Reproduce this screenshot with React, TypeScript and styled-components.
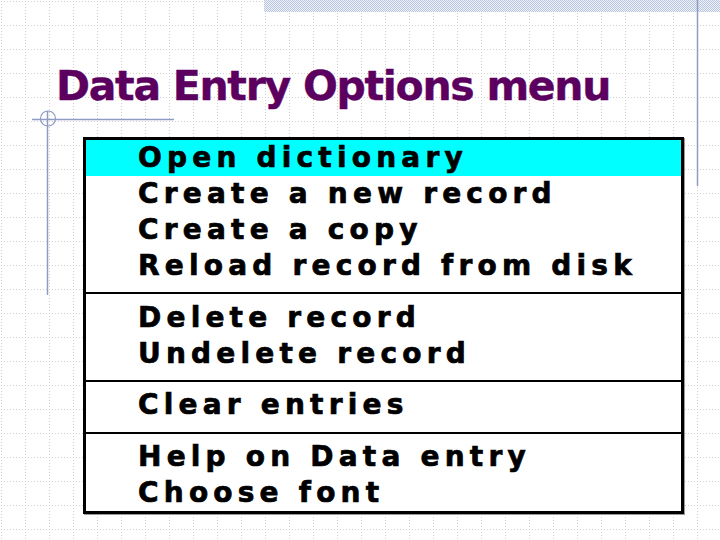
import React from 'react';
import styled, { createGlobalStyle } from 'styled-components';

const GlobalStyle = createGlobalStyle`
  html, body {
    margin: 0;
    padding: 0;
    background: #ffffff;
  }
`;

const Slide = styled.div`
  position: relative;
  width: 720px;
  height: 540px;
  overflow: hidden;
  background: #ffffff;
  padding: 62px 0 0 0;
  box-sizing: border-box;
  display: flex;
  flex-direction: column;
`;

const Backdrop = styled.svg`
  position: absolute;
  inset: 0;
  z-index: 0;
`;

const Title = styled.h1`
  position: relative;
  z-index: 1;
  margin: 0 0 0 56px;
  font-family: 'DejaVu Sans', 'Liberation Sans', sans-serif;
  font-weight: bold;
  font-size: 41px;
  letter-spacing: -1.3px;
  line-height: 48px;
  color: #5c005f;
  -webkit-text-stroke: 0.4px #5c005f;
`;

const Menu = styled.div`
  position: relative;
  z-index: 1;
  margin: 27px 0 0 83px;
  width: 601px;
  background: #ffffff;
  border: 3px solid #000000;
  box-sizing: border-box;
  box-shadow: 1px 1px 0 #9a9a9a;
  display: flex;
  flex-direction: column;
`;

const Group = styled.div<{ $top: number; $bottom: number }>`
  padding: ${({ $top, $bottom }) => `${$top}px 0 ${$bottom}px`};
  border-top: ${({ $top }) => ($top > 0 ? '2px solid #000000' : 'none')};
  display: flex;
  flex-direction: column;
`;

const Item = styled.div<{ $active?: boolean }>`
  height: 36px;
  line-height: 36px;
  padding-left: 52px;
  background: ${({ $active }) => ($active ? '#00ffff' : 'transparent')};
  font-family: 'DejaVu Sans', 'Liberation Sans', sans-serif;
  font-weight: bold;
  font-size: 28px;
  letter-spacing: 5.2px;
  color: #000000;
  -webkit-text-stroke: 0.7px #000000;
  white-space: nowrap;
`;

const groups = [
  { top: 0, bottom: 8, items: ['Open dictionary', 'Create a new record', 'Create a copy', 'Reload record from disk'] },
  { top: 6, bottom: 8, items: ['Delete record', 'Undelete record'] },
  { top: 5, bottom: 9, items: ['Clear entries'] },
  { top: 5, bottom: 0, items: ['Help on Data entry', 'Choose font'] },
];

const Decorations: React.FC = () => (
  <Backdrop width="720" height="540" viewBox="0 0 720 540">
    <defs>
      <pattern id="grid" x="1" y="1" width="24" height="24" patternUnits="userSpaceOnUse">
        <path d="M0.5 0 V24 M0 0.5 H24" stroke="#cfcfcf" strokeWidth="1" strokeDasharray="1 2" fill="none" />
      </pattern>
      <pattern id="checker" width="2" height="2" patternUnits="userSpaceOnUse">
        <rect width="2" height="2" fill="#eef1f8" />
        <rect width="1" height="1" fill="#b9c6e0" />
        <rect x="1" y="1" width="1" height="1" fill="#b9c6e0" />
      </pattern>
    </defs>
    <rect width="720" height="540" fill="url(#grid)" />
    <rect x="264" y="0" width="456" height="12" fill="url(#checker)" />
    <line x1="697.5" y1="0" x2="697.5" y2="186" stroke="#8e9bc4" strokeWidth="1.5" />
    <line x1="32" y1="119.5" x2="174" y2="119.5" stroke="#8e9bc4" strokeWidth="1.5" />
    <line x1="47.5" y1="111" x2="47.5" y2="295" stroke="#8e9bc4" strokeWidth="1.5" />
    <circle cx="48" cy="118.5" r="7.5" stroke="#8e9bc4" strokeWidth="1.2" fill="none" />
  </Backdrop>
);

const App: React.FC = () => {
  return (
    <>
      <GlobalStyle />
      <Slide>
        <Decorations />
        <Title>Data Entry Options menu</Title>
        <Menu>
          {groups.map((group, gi) => (
            <Group key={gi} $top={group.top} $bottom={group.bottom}>
              {group.items.map((label, ii) => (
                <Item key={label} $active={gi === 0 && ii === 0}>
                  {label}
                </Item>
              ))}
            </Group>
          ))}
        </Menu>
      </Slide>
    </>
  );
};

export default App;
